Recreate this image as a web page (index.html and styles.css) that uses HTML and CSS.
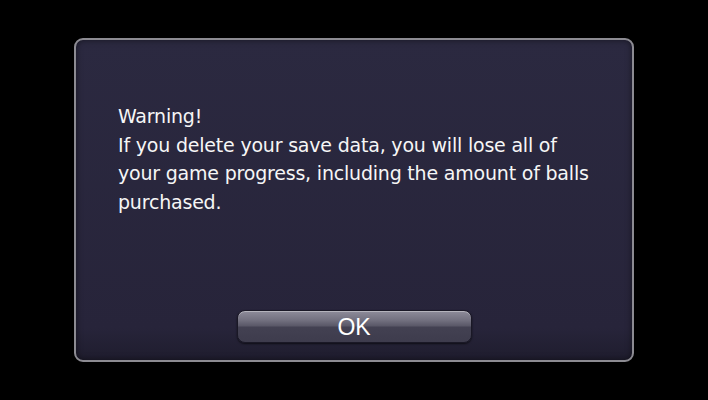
FILE: index.html
```html
<!DOCTYPE html>
<html lang="en">
<head>
<meta charset="UTF-8" />
<title>Delete Save Data</title>
<link rel="stylesheet" href="styles.css">
</head>
<body>
<div class="dialog">
  <div class="message">
    <p>Warning!</p>
    <p>If you delete your save data, you will lose all of your game progress, including the amount of balls purchased.</p>
  </div>
  <button class="ok-btn" type="button">OK</button>
</div>
</body>
</html>
```

FILE: styles.css
```css
* {
  box-sizing: border-box;
}
body {
  margin: 0;
  width: 708px;
  height: 400px;
  background: #000;
  font-family: 'DejaVu Sans', Verdana, sans-serif;
  padding: 38px 0 0 74px;
}
.dialog {
  width: 560px;
  height: 324px;
  border: 2px solid #8c8b92;
  border-radius: 9px;
  background: linear-gradient(180deg, #2b2940 0%, #27243a 90%, #1f1d2e 100%);
  box-shadow: inset 0 0 6px rgba(0,0,0,0.5);
  display: flex;
  flex-direction: column;
  align-items: center;
  padding: 62px 0 0 42px;
}
.message {
  align-self: flex-start;
  width: 478px;
  color: #f6f6f6;
  font-size: 19px;
  line-height: 28.5px;
  letter-spacing: -0.2px;
}
.message p {
  margin: 0;
}
.ok-btn {
  margin-top: auto;
  margin-bottom: 17px;
  margin-left: -42px;
  width: 235px;
  height: 33px;
  border: 1px solid #1a1826;
  border-radius: 8px;
  background: linear-gradient(180deg, #8e8c9a 0%, #72707f 30%, #5a5868 48%, #434152 52%, #3e3c4d 100%);
  box-shadow: inset 0 1px 0 rgba(255,255,255,0.35), 0 1px 2px rgba(0,0,0,0.6);
  color: #fff;
  font-family: 'Liberation Sans', Arial, sans-serif;
  font-size: 23px;
  padding: 2px 0 0;
  line-height: 29px;
}
```
